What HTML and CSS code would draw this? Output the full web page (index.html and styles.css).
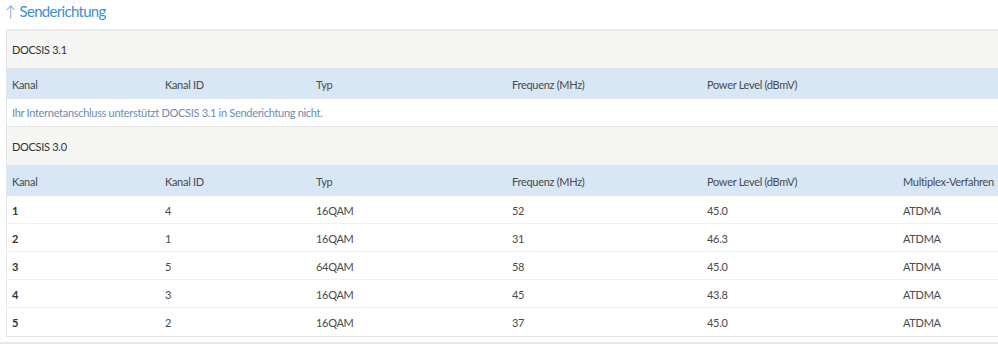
FILE: index.html
```html
<!DOCTYPE html>
<html lang="de">
<head>
<meta charset="utf-8">
<title>Senderichtung</title>
<link rel="stylesheet" href="styles.css">
</head>
<body>
<div class="page">
  <h2 class="title"><span class="arrow">↑</span>Senderichtung</h2>
  <div class="table">
    <div class="section">DOCSIS 3.1</div>
    <div class="grid head"><span>Kanal</span><span>Kanal ID</span><span>Typ</span><span>Frequenz (MHz)</span><span>Power Level (dBmV)</span><span></span></div>
    <div class="note">Ihr Internetanschluss unterstützt DOCSIS 3.1 in Senderichtung nicht.</div>
    <div class="section second">DOCSIS 3.0</div>
    <div class="grid head"><span>Kanal</span><span>Kanal ID</span><span>Typ</span><span>Frequenz (MHz)</span><span>Power Level (dBmV)</span><span>Multiplex-Verfahren</span></div>
    <div class="grid row"><span class="num">1</span><span>4</span><span>16QAM</span><span>52</span><span>45.0</span><span>ATDMA</span></div>
    <div class="grid row"><span class="num">2</span><span>1</span><span>16QAM</span><span>31</span><span>46.3</span><span>ATDMA</span></div>
    <div class="grid row"><span class="num">3</span><span>5</span><span>64QAM</span><span>58</span><span>45.0</span><span>ATDMA</span></div>
    <div class="grid row"><span class="num">4</span><span>3</span><span>16QAM</span><span>45</span><span>43.8</span><span>ATDMA</span></div>
    <div class="grid row last"><span class="num">5</span><span>2</span><span>16QAM</span><span>37</span><span>45.0</span><span>ATDMA</span></div>
  </div>
  <div class="separator"></div>
</div>
</body>
</html>
```
FILE: styles.css
```css
html, body {
  margin: 0;
  padding: 0;
  background: #ffffff;
  overflow: hidden;
}
body {
  font-family: Lato, "Liberation Sans", sans-serif;
  color: #444444;
  font-size: 11px;
  letter-spacing: -0.3px;
}
.page {
  width: 998px;
  overflow: hidden;
}
.title {
  margin: 0;
  padding: 2px 0 0 5px;
  height: 29px;
  box-sizing: border-box;
  font-size: 15px;
  font-weight: 400;
  color: #3f8fd4;
  line-height: 18px;
  letter-spacing: -0.7px;
}
.arrow {
  display: inline-block;
  margin-right: 4px;
  font-weight: 300;
}
.table {
  margin-left: 6px;
  border-left: 1px solid #e4e4e4;
  border-top: 2px solid #ececec;
  border-bottom: 1px solid #e4e4e4;
}
.grid {
  display: grid;
  grid-template-columns: 153px 151px 196px 195px 196px 1fr;
  align-items: center;
}
.grid span {
  padding-left: 5px;
  white-space: nowrap;
}
.section {
  background: #f5f5f4;
  height: 37px;
  line-height: 38px;
  padding-left: 5px;
  color: #333333;
  border-bottom: 1px solid #e2e2e2;
}
.section.second {
  height: 38px;
  line-height: 39px;
}
.head {
  background: #d7e7f5;
  height: 30px;
  color: #4a4a4a;
}
.note {
  height: 27px;
  line-height: 28px;
  padding-left: 5px;
  color: #6a8db0;
  border-bottom: 1px solid #e6e6e6;
}
.row {
  padding-top: 1px;
  box-sizing: border-box;
  height: 28px;
  border-bottom: 1px solid #efefef;
  color: #4a4a4a;
}
.row.last {
  border-bottom: none;
}
.row .num {
  font-weight: 700;
  color: #333333;
}
.separator {
  margin-top: 5px;
  height: 2px;
  background: #e6e6e6;
}
```
